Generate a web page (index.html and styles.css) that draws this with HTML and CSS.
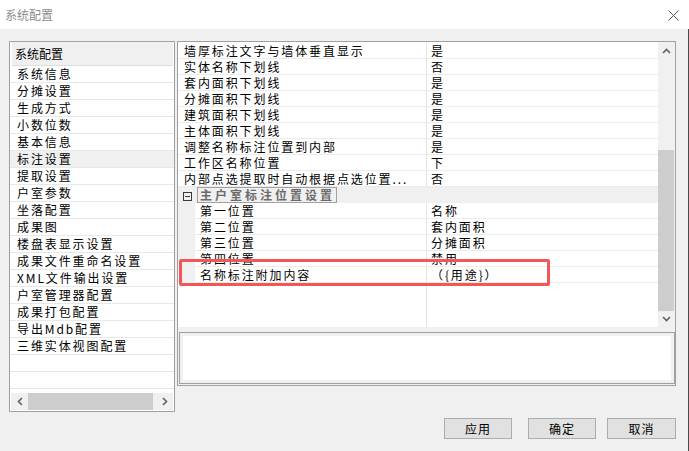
FILE: index.html
```html
<!DOCTYPE html>
<html lang="zh-CN">
  <head>
    <meta charset="UTF-8" />
    <title>系统配置</title>
    <link rel="stylesheet" href="styles.css">
  </head>
  <body>
    <div class="window">
      <!-- 标题栏 -->
      <div class="titlebar">
        <span class="title">系统配置</span>
        <svg class="close" width="11" height="11" viewBox="0 0 11 11">
          <path d="M0.5 0.5 L10.5 10.5 M10.5 0.5 L0.5 10.5" stroke="#555" stroke-width="1" fill="none" />
        </svg>
      </div>

      <div class="content">
        <div class="panels">
          <!-- 左侧配置列表 -->
          <div class="nav">
            <div class="nav-head">系统配置</div>
            <ul class="nav-list">
              <li>系统信息</li>
              <li>分摊设置</li>
              <li>生成方式</li>
              <li>小数位数</li>
              <li>基本信息</li>
              <li class="active">标注设置</li>
              <li>提取设置</li>
              <li>户室参数</li>
              <li>坐落配置</li>
              <li>成果图</li>
              <li>楼盘表显示设置</li>
              <li>成果文件重命名设置</li>
              <li>XML文件输出设置</li>
              <li>户室管理器配置</li>
              <li>成果打包配置</li>
              <li>导出Mdb配置</li>
              <li>三维实体视图配置</li>
              <li></li>
              <li></li>
            </ul>
            <div class="hscroll">
              <div class="sb-btn">
                <svg width="6" height="9" viewBox="0 0 6 9"><path d="M5 1 L1.5 4.5 L5 8" stroke="#606060" stroke-width="1.6" fill="none" /></svg>
              </div>
              <div class="hs-track"><div class="hs-thumb"></div></div>
              <div class="sb-btn">
                <svg width="6" height="9" viewBox="0 0 6 9"><path d="M1 1 L4.5 4.5 L1 8" stroke="#606060" stroke-width="1.6" fill="none" /></svg>
              </div>
            </div>
          </div>

          <!-- 右侧属性表 -->
          <div class="props">
            <div class="grid">
              <div class="grid-body">
                <div class="row"><span class="name">墙厚标注文字与墙体垂直显示</span><span class="value">是</span></div>
                <div class="row"><span class="name">实体名称下划线</span><span class="value">否</span></div>
                <div class="row"><span class="name">套内面积下划线</span><span class="value">是</span></div>
                <div class="row"><span class="name">分摊面积下划线</span><span class="value">是</span></div>
                <div class="row"><span class="name">建筑面积下划线</span><span class="value">是</span></div>
                <div class="row"><span class="name">主体面积下划线</span><span class="value">是</span></div>
                <div class="row"><span class="name">调整名称标注位置到内部</span><span class="value">是</span></div>
                <div class="row"><span class="name">工作区名称位置</span><span class="value">下</span></div>
                <div class="row"><span class="name">内部点选提取时自动根据点选位置...</span><span class="value">否</span></div>

                <div class="group">
                  <span class="toggle"></span>
                  <span class="group-title">主户室标注位置设置</span>
                </div>
                <div class="row sub"><span class="gutter"></span><span class="name">第一位置</span><span class="value">名称</span></div>
                <div class="row sub"><span class="gutter"></span><span class="name">第二位置</span><span class="value">套内面积</span></div>
                <div class="row sub"><span class="gutter"></span><span class="name">第三位置</span><span class="value">分摊面积</span></div>
                <div class="row sub"><span class="gutter"></span><span class="name">第四位置</span><span class="value">禁用</span></div>
                <div class="row sub"><span class="gutter"></span><span class="name">名称标注附加内容</span><span class="value">（{用途}）</span></div>
                <div class="row filler"><span class="name"></span><span class="value"></span></div>

                <div class="highlight"></div>
              </div>
              <div class="vscroll">
                <div class="sb-btn up">
                  <svg width="9" height="6" viewBox="0 0 9 6"><path d="M1 5 L4.5 1.5 L8 5" stroke="#606060" stroke-width="1.6" fill="none" /></svg>
                </div>
                <div class="vs-track"><div class="vs-thumb"></div></div>
                <div class="sb-btn down">
                  <svg width="9" height="6" viewBox="0 0 9 6"><path d="M1 1 L4.5 4.5 L8 1" stroke="#606060" stroke-width="1.6" fill="none" /></svg>
                </div>
              </div>
            </div>
            <div class="desc"><div class="desc-inner"></div></div>
          </div>
        </div>

        <!-- 底部按钮 -->
        <div class="buttons">
          <button>应用</button>
          <button class="btn-ok">确定</button>
          <button class="btn-cancel">取消</button>
        </div>
      </div>
    </div>
  </body>
</html>
```

FILE: styles.css
```css
/* 整体窗口 */
* {
  box-sizing: border-box;
}

body {
  margin: 0;
  font-family: "Noto Sans CJK SC", "Liberation Sans", sans-serif;
  font-size: 12px;
  color: #000;
  background: #f0f0f0;
}

.window {
  width: 689px;
  height: 451px;
  overflow: hidden;
  background: #f0f0f0;
}

/* 标题栏 */
.titlebar {
  height: 29px;
  background: #fff;
  display: flex;
  align-items: center;
  justify-content: space-between;
  padding: 0 10px 0 5px;
}

.title {
  font-size: 12px;
  color: #8c8c8c;
}

.close {
  display: block;
  margin-top: 1px;
}

.content {
  height: 422px;
  padding: 12px 12px 0 9px;
  border-right: 1px solid #4a4a4a;
}

.panels {
  display: flex;
  align-items: flex-start;
  gap: 2px;
}

/* 左侧列表 */
.nav {
  width: 166px;
  height: 371px;
  border: 1px solid #a0a0a0;
  background: #fff;
  display: flex;
  flex-direction: column;
}

.nav-head {
  height: 24px;
  margin: 0 1px 0 2px;
  padding-left: 3px;
  background: #f0f0f0;
  border-bottom: 1px solid #dedede;
  line-height: 23px;
  font-size: 12px;
}

.nav-list {
  list-style: none;
  margin: 0;
  padding: 0;
  flex: 1;
}

.nav-list li {
  height: 17px;
  line-height: 16px;
  padding-left: 7px;
  border-bottom: 1px solid #e8e8e8;
  letter-spacing: 1.9px;
  white-space: nowrap;
}

.nav-list li.active {
  background: #f0f0f0;
}

/* 滚动条 */
.hscroll {
  height: 17px;
  margin: 0 1px 1px 1px;
  background: #f0f0f0;
  display: flex;
}

.sb-btn {
  width: 17px;
  height: 17px;
  display: flex;
  align-items: center;
  justify-content: center;
}

.sb-btn svg {
  display: block;
}

.hs-track {
  flex: 1;
}

.hs-thumb {
  width: 125px;
  height: 100%;
  background: #cdcdcd;
}

/* 右侧属性表 */
.props {
  width: 499px;
  height: 345px;
  border: 1px solid #a0a0a0;
  display: flex;
  flex-direction: column;
}

.grid {
  height: 285px;
  display: flex;
  padding-right: 1px;
}

.grid-body {
  flex: 1;
  position: relative;
  background: #fff;
  padding-top: 1px;
  display: flex;
  flex-direction: column;
}

.row {
  height: 16px;
  display: flex;
  line-height: 15px;
}

.row .name,
.row .value {
  border-bottom: 1px solid #ececec;
  letter-spacing: 1.9px;
  white-space: nowrap;
  overflow: hidden;
}

.row .name {
  width: 249px;
  padding-left: 6px;
  border-right: 1px solid #e4e4e4;
}

.row .value {
  flex: 1;
  padding-left: 4px;
}

.row .gutter {
  width: 17px;
  background: #f0f0f0;
}

.row.sub .name {
  width: 232px;
  padding-left: 5px;
}

.row.filler {
  flex: 1;
}

.row.filler .name,
.row.filler .value {
  border-bottom: none;
}

/* 分组标题 */
.group {
  height: 16px;
  background: #f0f0f0;
  display: flex;
  align-items: center;
}

.toggle {
  position: relative;
  width: 9px;
  height: 9px;
  margin-left: 5px;
  margin-top: 3px;
  border: 1px solid #3a3a3a;
}

.toggle::after {
  content: "";
  position: absolute;
  left: 1px;
  right: 1px;
  top: 3px;
  height: 1px;
  background: #3a3a3a;
}

.group-title {
  height: 16px;
  margin-left: 5px;
  padding: 0 1px 0 2px;
  border: 1px solid #a0a0a0;
  line-height: 14px;
  font-weight: bold;
  color: #6b6b6b;
  letter-spacing: 3px;
}

/* 红色标记框 */
.highlight {
  position: absolute;
  left: 1px;
  top: 217px;
  width: 371px;
  height: 27px;
  border: 3px solid #f25757;
  border-radius: 2px;
}

.vscroll {
  width: 16px;
  background: #f0f0f0;
  display: flex;
  flex-direction: column;
}

.vscroll .sb-btn {
  width: 16px;
}

.vscroll .down {
  height: 16px;
}

.vs-track {
  flex: 1;
  display: flex;
  flex-direction: column;
  justify-content: flex-end;
}

.vs-thumb {
  height: 161px;
  background: #cdcdcd;
}

/* 说明框 */
.desc {
  height: 52px;
  margin: 5px 0 0 1px;
  padding: 3px;
  border: 1px solid #a0a0a0;
  background: #f0f0f0;
}

.desc-inner {
  height: 100%;
  background: #fff;
}

/* 按钮 */
.buttons {
  display: flex;
  justify-content: flex-end;
  margin-top: 6px;
}

button {
  width: 68px;
  height: 21px;
  padding: 0;
  background: #e1e1e1;
  border: 1px solid #adadad;
  font-family: "Noto Sans CJK SC", "Liberation Sans", sans-serif;
  font-size: 12px;
  letter-spacing: 1px;
  color: #000;
}

.btn-ok {
  margin-left: 16px;
}

.btn-cancel {
  width: 69px;
  margin-left: 11px;
}
```
